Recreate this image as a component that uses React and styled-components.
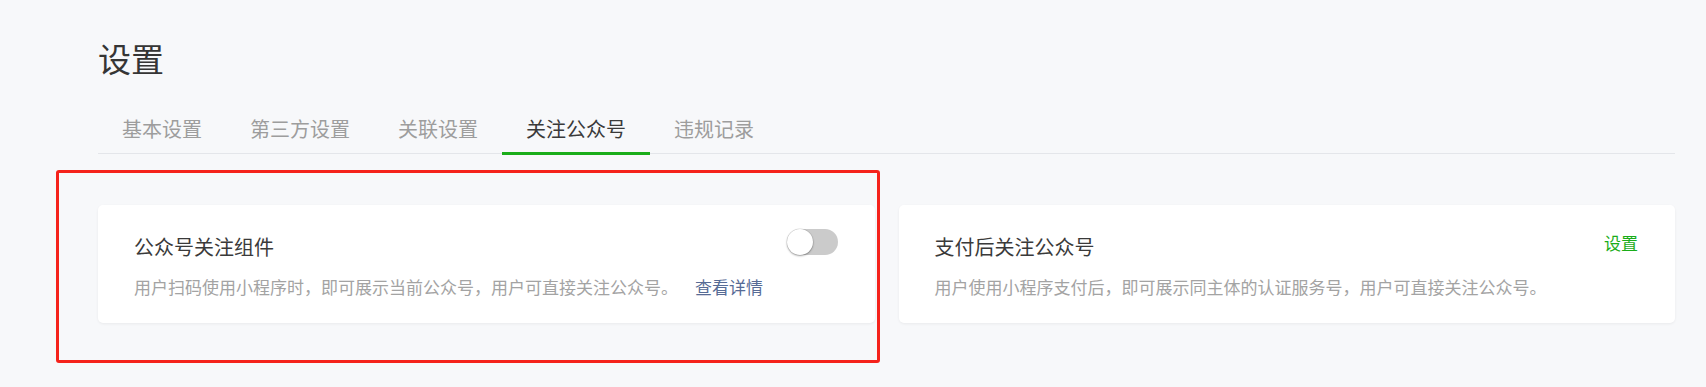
import React, { useState } from "react";
import styled, { createGlobalStyle } from "styled-components";

const GlobalStyle = createGlobalStyle`
  html, body {
    margin: 0;
    padding: 0;
    background: #f7f8fa;
  }
  body {
    font-family: "Noto Sans CJK SC", "Noto Sans", "Liberation Sans", sans-serif;
    color: #353535;
  }
  * { box-sizing: border-box; }
`;

const Page = styled.div`
  min-height: 387px;
  padding: 35px 31px 0 98px;
  background: #f7f8fa;
`;

const Heading = styled.h1`
  margin: 0;
  font-size: 33px;
  line-height: 46px;
  font-weight: 400;
  color: #353535;
`;

const TabBar = styled.nav`
  display: flex;
  margin-top: 34px;
  border-bottom: 1px solid #e4e6ea;
`;

const Tab = styled.div`
  position: relative;
  padding: 0 24px 10px;
  font-size: 20px;
  line-height: 28px;
  color: ${(p) => (p.$active ? "#3a3a3a" : "#9d9d9d")};
  cursor: pointer;

  &::after {
    content: "";
    display: ${(p) => (p.$active ? "block" : "none")};
    position: absolute;
    left: 0;
    right: 0;
    bottom: -2px;
    height: 3px;
    background: #1aad19;
  }
`;

const CardGrid = styled.div`
  display: grid;
  grid-template-columns: 1fr 1fr;
  gap: 24px;
  margin-top: 51px;
`;

const Highlight = styled.div`
  position: relative;
`;

const Annotation = styled.div`
  position: absolute;
  left: -42px;
  top: -35px;
  right: -5px;
  bottom: -40px;
  border: 3px solid #f5221b;
  border-radius: 3px;
  pointer-events: none;
`;

const Card = styled.section`
  height: 118px;
  padding: 28px 37px 0 36px;
  background: #ffffff;
  border-radius: 5px;
  box-shadow: 0 1px 3px rgba(0, 0, 0, 0.06);
`;

const CardHeader = styled.div`
  display: flex;
  justify-content: space-between;
  align-items: flex-start;
`;

const CardTitle = styled.h2`
  margin: 0;
  font-size: 20px;
  line-height: 28px;
  font-weight: 400;
  color: #3a3a3a;
`;

const CardDesc = styled.p`
  margin: 14px 0 0;
  font-size: 17px;
  line-height: 24px;
  color: #a3a3a3;
  white-space: nowrap;
`;

const Link = styled.a`
  margin-left: 17px;
  color: ${(p) => (p.$green ? "#1aad19" : "#576b95")};
  text-decoration: none;
  cursor: pointer;
`;

const HeaderLink = styled(Link)`
  margin: -2px 0 0;
  font-size: 17px;
  line-height: 24px;
`;

const Switch = styled.button`
  position: relative;
  width: 51px;
  height: 26px;
  margin-top: -4px;
  padding: 0;
  border: none;
  border-radius: 13px;
  background: ${(p) => (p.$on ? "#1aad19" : "#cbcbcb")};
  cursor: pointer;

  &::before {
    content: "";
    position: absolute;
    top: 0;
    left: ${(p) => (p.$on ? "25px" : "0")};
    width: 26px;
    height: 26px;
    border-radius: 50%;
    background: #ffffff;
    box-shadow: 0 1px 2px rgba(0, 0, 0, 0.35), 0 0 0 0.5px rgba(0, 0, 0, 0.12);
    transition: left 0.2s;
  }
`;

const tabs = ["基本设置", "第三方设置", "关联设置", "关注公众号", "违规记录"];

export default function App() {
  const [on, setOn] = useState(false);
  return (
    <>
      <GlobalStyle />
      <Page>
        <Heading>设置</Heading>
        <TabBar>
          {tabs.map((t) => (
            <Tab key={t} $active={t === "关注公众号"}>
              {t}
            </Tab>
          ))}
        </TabBar>
        <CardGrid>
          <Highlight>
            <Card>
              <CardHeader>
                <CardTitle>公众号关注组件</CardTitle>
                <Switch $on={on} onClick={() => setOn(!on)} aria-label="switch" />
              </CardHeader>
              <CardDesc>
                用户扫码使用小程序时，即可展示当前公众号，用户可直接关注公众号。
                <Link>查看详情</Link>
              </CardDesc>
            </Card>
            <Annotation />
          </Highlight>
          <Card>
            <CardHeader>
              <CardTitle>支付后关注公众号</CardTitle>
              <HeaderLink $green>设置</HeaderLink>
            </CardHeader>
            <CardDesc>
              用户使用小程序支付后，即可展示同主体的认证服务号，用户可直接关注公众号。
            </CardDesc>
          </Card>
        </CardGrid>
      </Page>
    </>
  );
}
